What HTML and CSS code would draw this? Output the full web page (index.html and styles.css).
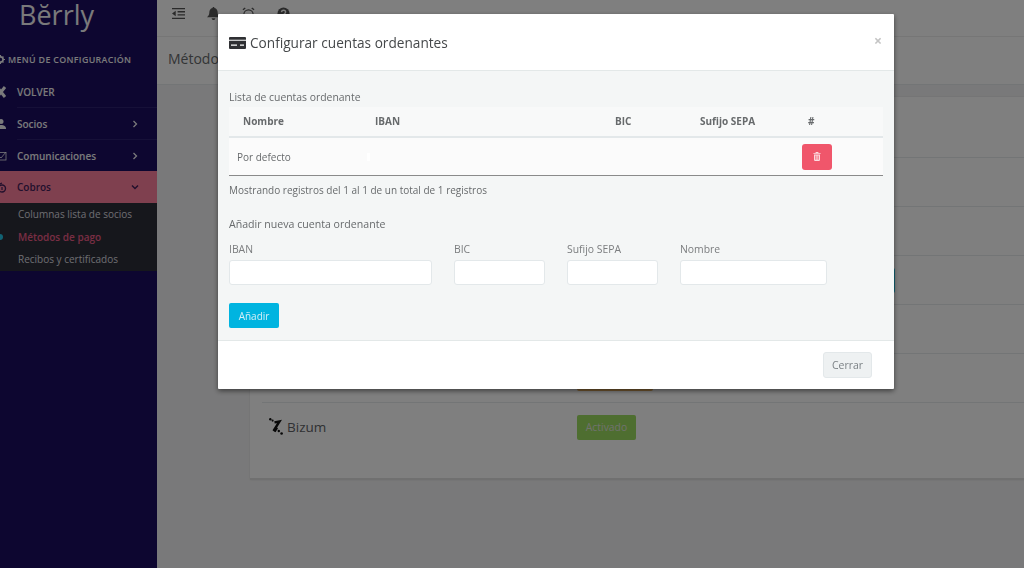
FILE: index.html
```html
<!DOCTYPE html>
<html lang="es">
<head>
    <meta charset="UTF-8">
    <title>Berrly - Métodos de pago</title>
    <link rel="stylesheet" href="styles.css">
</head>
<body>
    <aside class="sidebar">
        <div class="logo">Bĕrrly</div>
        <div class="menu-title">
            <svg class="menu-title-icon" viewBox="0 0 16 16"><circle cx="8" cy="8" r="4.6" fill="none" stroke="currentColor" stroke-width="3"/><path d="M7 0h2v3H7zM7 13h2v3H7zM0 7h3v2H0zM13 7h3v2h-3zM2 3.400 3.400 2l2 2L4 5.400zM10.600 12l1.400-1.400 2 2-1.400 1.400zM2 12.600l2-2L5.400 12l-2 2zM10.600 4l2-2L14 3.400l-2 2z" fill="currentColor"/></svg>
            <span>MENÚ DE CONFIGURACIÓN</span>
        </div>
        <nav>
            <a class="nav-item nav-back">
                <svg class="nav-icon" viewBox="0 0 12 12"><path d="M2 1l8 10M10 1L2 11" stroke="currentColor" stroke-width="3" fill="none"/></svg>
                <span class="nav-label">VOLVER</span>
            </a>
            <a class="nav-item">
                <svg class="nav-icon" viewBox="0 0 12 12"><circle cx="6" cy="3.500" r="2.500" fill="currentColor"/><path d="M1 11c0-3 2-4 5-4s5 1 5 4z" fill="currentColor"/></svg>
                <span class="nav-label">Socios</span>
                <svg class="nav-arrow" viewBox="0 0 8 8"><path d="M2.500 1l3 3-3 3" stroke="currentColor" stroke-width="1.300" fill="none"/></svg>
            </a>
            <a class="nav-item nav-short">
                <svg class="nav-icon" viewBox="0 0 12 12"><rect x="1" y="2.500" width="10" height="7.500" fill="none" stroke="currentColor" stroke-width=".8"/><path d="M3 5l3 3 5-6" fill="none" stroke="currentColor" stroke-width=".8"/></svg>
                <span class="nav-label">Comunicaciones</span>
                <svg class="nav-arrow" viewBox="0 0 8 8"><path d="M2.500 1l3 3-3 3" stroke="currentColor" stroke-width="1.300" fill="none"/></svg>
            </a>
            <a class="nav-item nav-active">
                <svg class="nav-icon" viewBox="0 0 12 12"><circle cx="7" cy="7.500" r="3.500" fill="none" stroke="currentColor" stroke-width="1.400"/><path d="M1 2l3 1.500L7 2M7 6v3" fill="none" stroke="currentColor" stroke-width="1.200"/></svg>
                <span class="nav-label">Cobros</span>
                <svg class="nav-arrow" viewBox="0 0 8 8"><path d="M1 2.500l3 3 3-3" stroke="currentColor" stroke-width="1.500" fill="none"/></svg>
            </a>
            <div class="submenu">
                <a class="submenu-item">Columnas lista de socios</a>
                <a class="submenu-item submenu-current">Métodos de pago</a>
                <a class="submenu-item">Recibos y certificados</a>
            </div>
        </nav>
    </aside>

    <main class="page">
        <header class="topbar">
            <svg class="topbar-icon" viewBox="0 0 14 12"><path d="M0 0h14v1.500H0zM6 3.300h8v1.500H6zM6 6.700h8v1.500H6zM0 10.500h14V12H0zM4 3v6L0 6z" fill="currentColor"/></svg>
            <svg class="topbar-icon" viewBox="0 0 14 14"><path d="M7 0c.7 0 1 .5 1 1 2.500.5 3.500 2.500 3.500 5 0 2.500 1 3.500 2.500 5H0c1.500-1.500 2.500-2.500 2.500-5 0-2.500 1-4.500 3.500-5 0-.5.300-1 1-1zM5 12h4c0 1-1 2-2 2s-2-1-2-2z" fill="currentColor"/></svg>
            <svg class="topbar-icon" viewBox="0 0 14 14"><circle cx="7" cy="8" r="5" fill="none" stroke="currentColor" stroke-width="1.300"/><path d="M1 3l2.500-2M13 3l-2.500-2" stroke="currentColor" stroke-width="1.500"/></svg>
            <svg class="topbar-icon" viewBox="0 0 14 14"><circle cx="7" cy="7" r="6.500" fill="currentColor"/><path d="M4.800 5.500C5 4 6 3.500 7 3.500c1.300 0 2.300.8 2.300 2 0 1.800-2.300 1.700-2.300 3.500" fill="none" stroke="#fff" stroke-width="1.500"/></svg>
        </header>
        <div class="page-title">Métodos de pago</div>
        <section class="card">
            <div class="card-head"></div>
            <div class="pay-row"></div>
            <div class="pay-row"></div>
            <div class="pay-row"><span class="pay-btn pay-btn-teal"></span></div>
            <div class="pay-row"></div>
            <div class="pay-row"><span class="pay-btn pay-btn-orange"></span></div>
            <div class="pay-row pay-row-last">
                <span class="pay-name">
                    <svg class="bizum" viewBox="0 0 14 17"><path d="M5.500 4.400l5-.9-6 9.500" fill="none" stroke="currentColor" stroke-width="2.400"/><path d="M8 9.500l-2.500 4" fill="none" stroke="currentColor" stroke-width="2.400"/><circle cx="1.300" cy="1.300" r="1.200" fill="currentColor"/><circle cx="3.600" cy="2.600" r="1.100" fill="currentColor"/><circle cx="9.800" cy="13" r="1.200" fill="currentColor"/><circle cx="12.600" cy="15.500" r="1.300" fill="currentColor"/></svg>
                    Bizum
                </span>
                <span class="pay-btn pay-btn-green">Activado</span>
            </div>
        </section>
    </main>

    <div class="backdrop"></div>

    <div class="modal">
        <div class="modal-header">
            <h4 class="modal-title">
                <svg class="card-icon" viewBox="0 0 17 12"><path d="M1 0h15a1 1 0 0 1 1 1v1.800H0V1a1 1 0 0 1 1-1zM0 3.800h17V11a1 1 0 0 1-1 1H1a1 1 0 0 1-1-1zM2 7.500v1.200h6V7.500zM11 7.500v1.200h4V7.500z" fill="#2f3033" fill-rule="evenodd"/></svg>
                Configurar cuentas ordenantes
            </h4>
            <span class="modal-close">×</span>
        </div>
        <div class="modal-body">
            <p class="list-title">Lista de cuentas ordenante</p>
            <table class="accounts">
                <colgroup>
                    <col class="col-name"><col class="col-iban"><col class="col-bic"><col class="col-sepa"><col class="col-actions">
                </colgroup>
                <thead>
                    <tr><th>Nombre</th><th>IBAN</th><th>BIC</th><th>Sufijo SEPA</th><th>#</th></tr>
                </thead>
                <tbody>
                    <tr>
                        <td>Por defecto</td>
                        <td><span class="cell-mark"></span></td>
                        <td></td>
                        <td></td>
                        <td>
                            <button class="btn-delete">
                                <svg viewBox="0 0 10 11" class="trash"><path d="M3.500 0h3l.5 1.200h2.500v1H.500v-1H3zM1.300 3h7.400v7a1 1 0 0 1-1 1H2.300a1 1 0 0 1-1-1zM3 4.300v5.400h.8V4.300zM4.600 4.300v5.400h.8V4.300zM6.200 4.300v5.400H7V4.300z" fill="#fff" fill-rule="evenodd" opacity=".8"/></svg>
                            </button>
                        </td>
                    </tr>
                </tbody>
            </table>
            <p class="table-info">Mostrando registros del 1 al 1 de un total de 1 registros</p>
            <p class="add-title">Añadir nueva cuenta ordenante</p>
            <form class="add-form">
                <label class="field">IBAN<input type="text"></label>
                <label class="field">BIC<input type="text"></label>
                <label class="field">Sufijo SEPA<input type="text"></label>
                <label class="field">Nombre<input type="text"></label>
            </form>
            <button class="btn-add">Añadir</button>
        </div>
        <div class="modal-footer">
            <button class="btn-close">Cerrar</button>
        </div>
    </div>
</body>
</html>
```

FILE: styles.css
```css
body {
    margin: 0;
    height: 568px;
    overflow: hidden;
    display: flex;
    background-color: #f3f3f4;
    color: #676a6c;
    font-family: 'Open Sans', sans-serif;
    font-size: 10px;
}

/* sidebar, colours are doubled because the backdrop halves them */
.sidebar {
    width: 157px;
    flex-shrink: 0;
    height: 568px;
    background-color: #1a0c60;
    color: #f4f4f6;
    overflow: hidden;
}

.logo {
    height: 30px;
    padding-left: 19px;
    font-size: 27px;
    line-height: 30px;
    font-weight: 500;
    color: #f4f4f6;
}

.menu-title {
    display: flex;
    align-items: center;
    margin-top: 19px;
    height: 20px;
    font-size: 8.9px;
    font-weight: 600;
    letter-spacing: .32px;
}

.menu-title-icon {
    width: 9px;
    height: 9px;
    margin-left: -4px;
    margin-right: 3px;
}

.nav-item {
    display: flex;
    align-items: center;
    height: 32px;
    padding-left: 17px;
    font-weight: 600;
    position: relative;
}

.nav-back {
    margin-top: 7px;
}

.nav-short {
    height: 31px;
}

.nav-item:nth-child(-n+2)::after {
    content: "";
    position: absolute;
    left: 17px;
    right: 0;
    bottom: 0;
    height: 1px;
    background-color: #2d2170;
}

.nav-icon {
    width: 12px;
    height: 12px;
    margin-left: -22px;
    margin-right: 10px;
    flex-shrink: 0;
}

.nav-label {
    flex: 1;
}

.nav-arrow {
    width: 8px;
    height: 8px;
    margin-right: 18px;
}

.nav-active {
    background-color: #ff809e;
    color: #44205a;
}

.submenu {
    display: flex;
    flex-direction: column;
    height: 68px;
    background-color: #2c2e38;
}

.submenu-item {
    height: 22.5px;
    line-height: 22.5px;
    padding-left: 18px;
    color: #dcdce0;
}

.submenu-current {
    color: #f05c88;
    font-weight: 600;
    position: relative;
}

.submenu-current::before {
    content: "";
    position: absolute;
    left: -3px;
    top: 8px;
    width: 6px;
    height: 6px;
    border-radius: 50%;
    background-color: #23c6e8;
}

/* page behind the modal */
.page {
    flex: 1;
    min-width: 0;
}

.topbar {
    display: flex;
    align-items: center;
    height: 37px;
    box-sizing: border-box;
    padding: 0 0 9px 15px;
    gap: 22px;
    background-color: #fff;
    border-bottom: 1px solid #ececec;
    color: #555;
}

.topbar-icon {
    width: 13px;
    height: 13px;
}

.page-title {
    height: 48px;
    box-sizing: border-box;
    padding: 12px 0 0 11px;
    font-size: 14px;
    background-color: #fff;
    border-bottom: 1px solid #e7eaec;
}

.card {
    margin: 12px -20px 0 93px;
    background-color: #fff;
    border-bottom: 2px solid #e0e0e0;
    box-shadow: 0 0 2px rgba(0, 0, 0, .1);
}

.card-head {
    height: 60px;
}

.pay-row {
    height: 49px;
    box-sizing: border-box;
    margin-left: 12px;
    border-top: 1px solid #e7eaec;
    display: flex;
    align-items: center;
}

.pay-row-last {
    height: 76px;
    align-items: flex-start;
    padding-top: 12px;
}

.pay-name {
    display: flex;
    align-items: center;
    gap: 4px;
    width: 308px;
    margin-left: 7px;
    height: 23px;
    font-size: 13.5px;
    color: #606266;
}

.bizum {
    width: 14px;
    height: 17px;
    color: #111;
}

.pay-btn {
    display: inline-block;
    height: 25px;
    line-height: 25px;
    border-radius: 2px;
    text-align: center;
    font-size: 10.4px;
}

.pay-btn-green {
    width: 59px;
    background-color: #9cdc60;
    color: #e0e4dc;
}

.pay-btn-orange {
    width: 76px;
    margin-left: 315px;
    background-color: #e8b060;
}

.pay-btn-teal {
    width: 60px;
    margin-left: 573px;
    background-color: #23c6e8;
}

.backdrop {
    position: fixed;
    top: 0;
    left: 0;
    right: 0;
    bottom: 0;
    background-color: #000;
    opacity: .5;
}

/* modal */
.modal {
    position: fixed;
    top: 14px;
    left: 218px;
    width: 676px;
    background-color: #fff;
    box-shadow: 0 2px 5px rgba(0, 0, 0, .5);
    border-radius: 1px;
}

.modal-header {
    display: flex;
    align-items: center;
    justify-content: space-between;
    height: 57px;
    box-sizing: border-box;
    padding: 1px 12px 0 11px;
    border-bottom: 1px solid #e3e8e8;
}

.modal-title {
    display: flex;
    align-items: center;
    gap: 4px;
    margin: 0;
    font-size: 13.65px;
    font-weight: 400;
    color: #45484a;
}

.card-icon {
    width: 17px;
    height: 12px;
}

.modal-close {
    margin-bottom: 4px;
    font-size: 14px;
    font-weight: 700;
    color: #c4c4c4;
}

.modal-body {
    height: 269px;
    box-sizing: border-box;
    padding: 20px 11px 0;
    background-color: #f4f6f6;
}

.list-title {
    margin: 0;
    height: 16px;
    font-size: 10.4px;
    line-height: 12px;
}

.accounts {
    width: 654px;
    table-layout: fixed;
    border-collapse: collapse;
    background-color: #fbfbfb;
}

.col-name { width: 132px; }
.col-iban { width: 240px; }
.col-bic { width: 85px; }
.col-sepa { width: 108px; }
.col-actions { width: 89px; }

.accounts th {
    height: 30px;
    padding: 0 14px 2px;
    box-sizing: border-box;
    text-align: left;
    font-weight: 700;
    background-color: #f8f9f9;
    border-bottom: 2px solid #e3e8ea;
}

.accounts td {
    height: 37px;
    padding: 0 8px;
    border-bottom: 1px solid #8a8a8a;
}

.cell-mark {
    display: block;
    width: 3px;
    height: 8px;
    margin-left: -2px;
    background-color: #fff;
}

.btn-delete {
    display: flex;
    align-items: center;
    justify-content: center;
    width: 30px;
    height: 26px;
    padding: 0;
    border: 0;
    border-radius: 3px;
    background-color: #f0566b;
}

.trash {
    width: 8px;
    height: 9px;
}

.table-info {
    margin: 7px 0 0;
    height: 34px;
    line-height: 14px;
}

.add-title {
    margin: 0;
    height: 26px;
    font-size: 10.6px;
    line-height: 15px;
}

.add-form {
    display: grid;
    grid-template-columns: 203px 91px 91px 147px;
    column-gap: 22px;
}

.field {
    display: flex;
    flex-direction: column;
    gap: 5px;
    font-size: 10.4px;
    line-height: 12px;
    color: #7b7d7f;
}

.field input {
    box-sizing: border-box;
    height: 25px;
    border: 1px solid #e3e8ea;
    border-radius: 3px;
    background-color: #fff;
}

.btn-add {
    display: block;
    width: 50px;
    height: 25px;
    margin-top: 18px;
    padding: 0;
    border: 0;
    border-radius: 2px;
    background-color: #00b4e0;
    color: #d4eff7;
    font-family: inherit;
    font-size: 10px;
}

.modal-footer {
    display: flex;
    justify-content: flex-end;
    height: 49px;
    box-sizing: border-box;
    padding: 11px 22px 0 0;
    border-top: 1px solid #e3e8e8;
}

.btn-close {
    width: 49px;
    height: 26px;
    padding: 0;
    border: 1px solid #e3e8ea;
    border-radius: 3px;
    background-color: #eef1f2;
    color: #7b8185;
    font-family: inherit;
    font-size: 10.5px;
}
```
